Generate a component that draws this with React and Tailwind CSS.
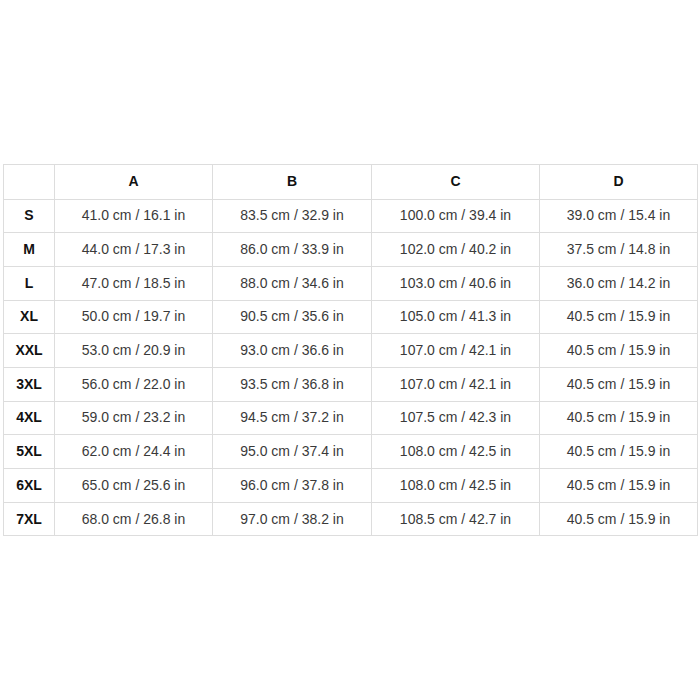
const rows = [
  ["S", "41.0 cm / 16.1 in", "83.5 cm / 32.9 in", "100.0 cm / 39.4 in", "39.0 cm / 15.4 in"],
  ["M", "44.0 cm / 17.3 in", "86.0 cm / 33.9 in", "102.0 cm / 40.2 in", "37.5 cm / 14.8 in"],
  ["L", "47.0 cm / 18.5 in", "88.0 cm / 34.6 in", "103.0 cm / 40.6 in", "36.0 cm / 14.2 in"],
  ["XL", "50.0 cm / 19.7 in", "90.5 cm / 35.6 in", "105.0 cm / 41.3 in", "40.5 cm / 15.9 in"],
  ["XXL", "53.0 cm / 20.9 in", "93.0 cm / 36.6 in", "107.0 cm / 42.1 in", "40.5 cm / 15.9 in"],
  ["3XL", "56.0 cm / 22.0 in", "93.5 cm / 36.8 in", "107.0 cm / 42.1 in", "40.5 cm / 15.9 in"],
  ["4XL", "59.0 cm / 23.2 in", "94.5 cm / 37.2 in", "107.5 cm / 42.3 in", "40.5 cm / 15.9 in"],
  ["5XL", "62.0 cm / 24.4 in", "95.0 cm / 37.4 in", "108.0 cm / 42.5 in", "40.5 cm / 15.9 in"],
  ["6XL", "65.0 cm / 25.6 in", "96.0 cm / 37.8 in", "108.0 cm / 42.5 in", "40.5 cm / 15.9 in"],
  ["7XL", "68.0 cm / 26.8 in", "97.0 cm / 38.2 in", "108.5 cm / 42.7 in", "40.5 cm / 15.9 in"],
];

export default function App() {
  return (
    <div className="w-[700px] h-[700px] bg-white pt-[164px] pl-[3px] font-['Liberation_Sans',Arial,sans-serif]">
      <table className="table-fixed border-collapse w-[694px] text-[14px]">
        <colgroup>
          <col className="w-[51px]" />
          <col className="w-[158px]" />
          <col className="w-[159px]" />
          <col className="w-[168px]" />
          <col className="w-[158px]" />
        </colgroup>
        <thead>
          <tr className="h-[34.5px]">
            <th className="border border-[#dddddd]"></th>
            {["A", "B", "C", "D"].map((h) => (
              <th key={h} className="border border-[#dddddd] font-bold text-[#111111]">
                {h}
              </th>
            ))}
          </tr>
        </thead>
        <tbody>
          {rows.map((r) => (
            <tr key={r[0]} className="h-[33.7px]">
              <td className="border border-[#dddddd] text-center font-bold text-[#111111]">{r[0]}</td>
              {r.slice(1).map((v, i) => (
                <td key={i} className="border border-[#dddddd] text-center text-[#3a3a3a]">
                  {v}
                </td>
              ))}
            </tr>
          ))}
        </tbody>
      </table>
    </div>
  );
}
